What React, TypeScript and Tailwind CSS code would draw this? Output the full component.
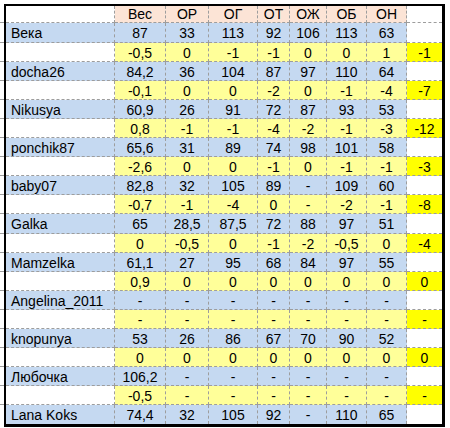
import React from "react";

type Person = {
  name: string;
  values: string[];
  diff?: string[];
  total?: string;
};

const headers = ["Вес", "ОР", "ОГ", "ОТ", "ОЖ", "ОБ", "ОН"];

const people: Person[] = [
  { name: "Века", values: ["87", "33", "113", "92", "106", "113", "63"], diff: ["-0,5", "0", "-1", "-1", "0", "0", "1"], total: "-1" },
  { name: "docha26", values: ["84,2", "36", "104", "87", "97", "110", "64"], diff: ["-0,1", "0", "0", "-2", "0", "-1", "-4"], total: "-7" },
  { name: "Nikusya", values: ["60,9", "26", "91", "72", "87", "93", "53"], diff: ["0,8", "-1", "-1", "-4", "-2", "-1", "-3"], total: "-12" },
  { name: "ponchik87", values: ["65,6", "31", "89", "74", "98", "101", "58"], diff: ["-2,6", "0", "0", "-1", "0", "-1", "-1"], total: "-3" },
  { name: "baby07", values: ["82,8", "32", "105", "89", "-", "109", "60"], diff: ["-0,7", "-1", "-4", "0", "-", "-2", "-1"], total: "-8" },
  { name: "Galka", values: ["65", "28,5", "87,5", "72", "88", "97", "51"], diff: ["0", "-0,5", "0", "-1", "-2", "-0,5", "0"], total: "-4" },
  { name: "Mamzelka", values: ["61,1", "27", "95", "68", "84", "97", "55"], diff: ["0,9", "0", "0", "0", "0", "0", "0"], total: "0" },
  { name: "Angelina_2011", values: ["-", "-", "-", "-", "-", "-", "-"], diff: ["-", "-", "-", "-", "-", "-", "-"], total: "-" },
  { name: "knopunya", values: ["53", "26", "86", "67", "70", "90", "52"], diff: ["0", "0", "0", "0", "0", "0", "0"], total: "0" },
  { name: "Любочка", values: ["106,2", "-", "-", "-", "-", "-", "-"], diff: ["-0,5", "-", "-", "-", "-", "-", "-"], total: "-" },
  { name: "Lana Koks", values: ["74,4", "32", "105", "92", "-", "110", "65"] },
];

type Row = { kind: "blue" | "yellow"; cells: string[]; tall: boolean; last: boolean };

const rows: Row[] = [];
people.forEach((p) => {
  rows.push({ kind: "blue", cells: [p.name, ...p.values, ""], tall: false, last: false });
  if (p.diff) rows.push({ kind: "yellow", cells: ["", ...p.diff, p.total ?? ""], tall: false, last: false });
});
rows[0].tall = true;
rows[10].tall = true;
rows[rows.length - 1].last = true;

const line = "border-dashed border-[#9d9d9d]";

function cellClass(row: Row, col: number) {
  const edge = col === 8 ? "" : "border-r";
  const bottom = row.last ? "" : "border-b";
  let bg = "";
  if (row.kind === "blue") bg = col === 8 ? "bg-white" : "bg-[#c5d9f1]";
  else bg = col === 0 ? "bg-white" : col === 8 ? "bg-[#ffff00]" : "bg-[#ffff99]";
  const align = col === 0 ? "justify-start pl-[5px]" : "justify-center";
  return `flex items-center pt-px ${align} ${edge} ${bottom} ${line} ${bg}`;
}

export default function App() {
  return (
    <div className="w-[450px] h-[428px] bg-white pt-[4px] flex text-[14px] text-black leading-none" style={{ fontFamily: '"Liberation Sans", Arial, sans-serif' }}>
      <div className="w-[4px] flex flex-col">
        <div className={`h-[19px] border-b ${line}`} />
        {rows.map((r, i) => (
          <div key={i} className={`${r.tall ? "h-[20px]" : "h-[19px]"} ${r.last ? "" : "border-b"} ${line}`} />
        ))}
      </div>
      <div className="self-start border-l-2 border-t-2 border-r-[3px] border-b-[3px] border-black">
        <div className="grid grid-cols-[109px_51px_43px_49px_32px_37px_40px_40px_35px]">
          <div className={`h-[17px] border-r border-b ${line} bg-white`} />
          {headers.map((h) => (
            <div key={h} className={`h-[17px] flex items-center justify-center border-r border-b ${line} bg-[#fce4d6]`}>
              {h}
            </div>
          ))}
          <div className={`h-[17px] border-b ${line} bg-white`} />
          {rows.map((r, i) =>
            r.cells.map((c, j) => (
              <div key={`${i}-${j}`} className={`${r.tall ? "h-[20px]" : "h-[19px]"} ${cellClass(r, j)}`}>
                {c}
              </div>
            ))
          )}
        </div>
      </div>
    </div>
  );
}
